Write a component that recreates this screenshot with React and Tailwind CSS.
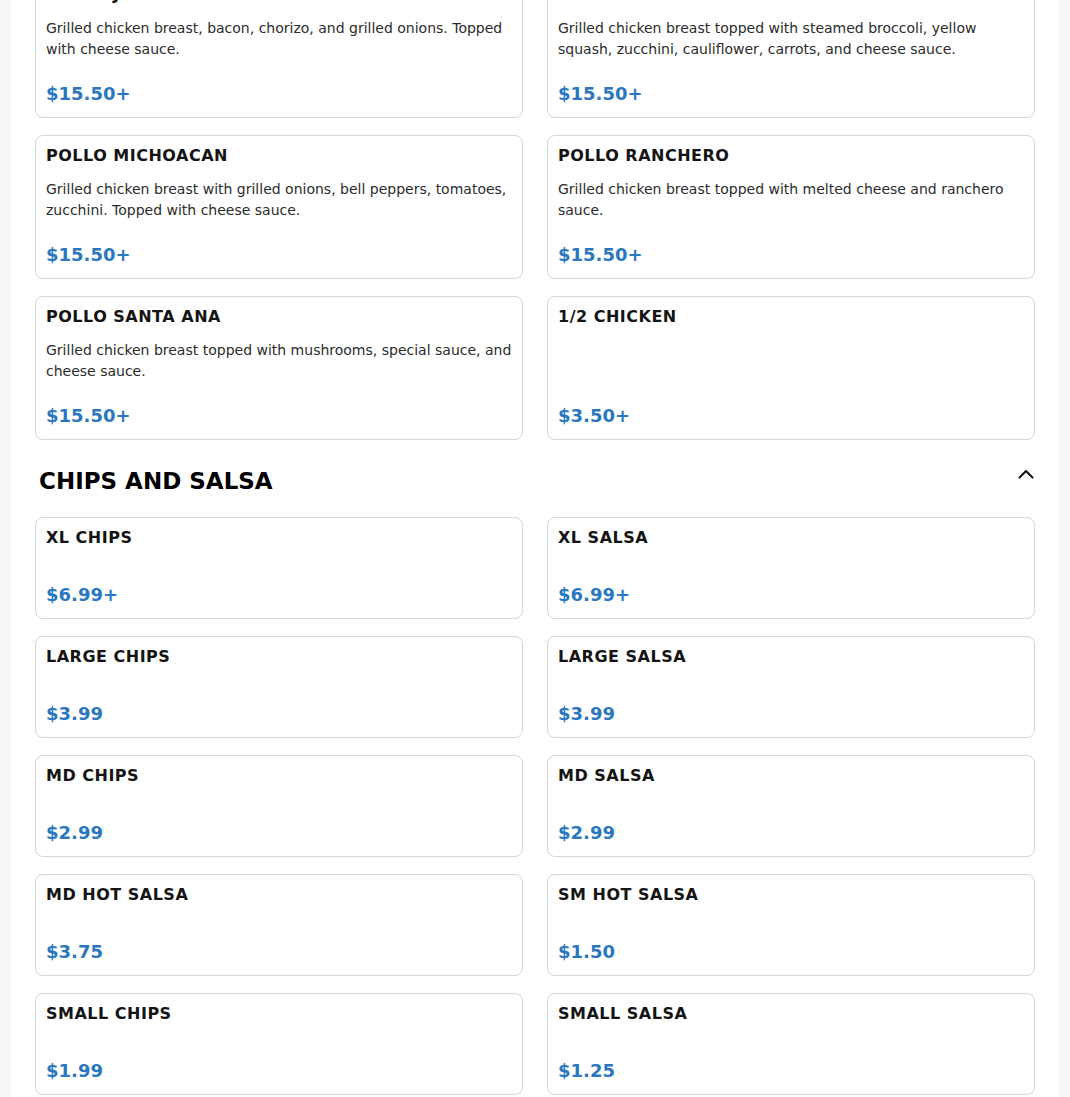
import React from "react";

const pollo = [
  { name: "POLLO JALISCO", desc: "Grilled chicken breast, bacon, chorizo, and grilled onions. Topped with cheese sauce.", price: "$15.50+" },
  { name: "POLLO VEGETAL", desc: "Grilled chicken breast topped with steamed broccoli, yellow squash, zucchini, cauliflower, carrots, and cheese sauce.", price: "$15.50+" },
  { name: "POLLO MICHOACAN", desc: "Grilled chicken breast with grilled onions, bell peppers, tomatoes, zucchini. Topped with cheese sauce.", price: "$15.50+" },
  { name: "POLLO RANCHERO", desc: "Grilled chicken breast topped with melted cheese and ranchero sauce.", price: "$15.50+" },
  { name: "POLLO SANTA ANA", desc: "Grilled chicken breast topped with mushrooms, special sauce, and cheese sauce.", price: "$15.50+" },
  { name: "1/2 CHICKEN", desc: "", price: "$3.50+" },
];

const chips = [
  { name: "XL CHIPS", price: "$6.99+" },
  { name: "XL SALSA", price: "$6.99+" },
  { name: "LARGE CHIPS", price: "$3.99" },
  { name: "LARGE SALSA", price: "$3.99" },
  { name: "MD CHIPS", price: "$2.99" },
  { name: "MD SALSA", price: "$2.99" },
  { name: "MD HOT SALSA", price: "$3.75" },
  { name: "SM HOT SALSA", price: "$1.50" },
  { name: "SMALL CHIPS", price: "$1.99" },
  { name: "SMALL SALSA", price: "$1.25" },
];

function Card({ item }) {
  return (
    <div className="flex flex-col rounded-lg border border-[#d6d6d6] bg-white p-[10px]">
      <h3 className="text-[16px] font-bold leading-[normal] tracking-[0.5px] text-[#141414]">{item.name}</h3>
      <p className="mt-[14px] text-[14px] leading-[21px] text-[#2b2b2b]">{item.desc}</p>
      <div className="mt-auto pt-5 text-[18px] font-bold leading-[27px] text-[#2a77c0]">{item.price}</div>
    </div>
  );
}

export default function App() {
  return (
    <div className="h-[1097px] overflow-hidden bg-[#f7f7f7] px-[11px]" style={{ fontFamily: '"DejaVu Sans", sans-serif' }}>
      <div className="bg-white px-6 pb-10">
        <div className="-mt-[26px] grid grid-cols-2 gap-x-6 gap-y-[17px]">
          {pollo.map((it) => (
            <Card key={it.name} item={it} />
          ))}
        </div>
        <div className="mb-[22px] mt-[28px] flex items-start justify-between px-1">
          <h2 className="text-[23px] font-bold leading-[27px] text-black">CHIPS AND SALSA</h2>
          <svg className="-mr-[3px] mt-[1px]" width="16" height="10" viewBox="0 0 16 10" fill="none">
            <polyline points="1.5,8.5 8,2 14.5,8.5" stroke="#111" strokeWidth="2" strokeLinecap="round" strokeLinejoin="round" />
          </svg>
        </div>
        <div className="grid grid-cols-2 gap-x-6 gap-y-[17px]">
          {chips.map((it) => (
            <Card key={it.name} item={it} />
          ))}
        </div>
      </div>
    </div>
  );
}
